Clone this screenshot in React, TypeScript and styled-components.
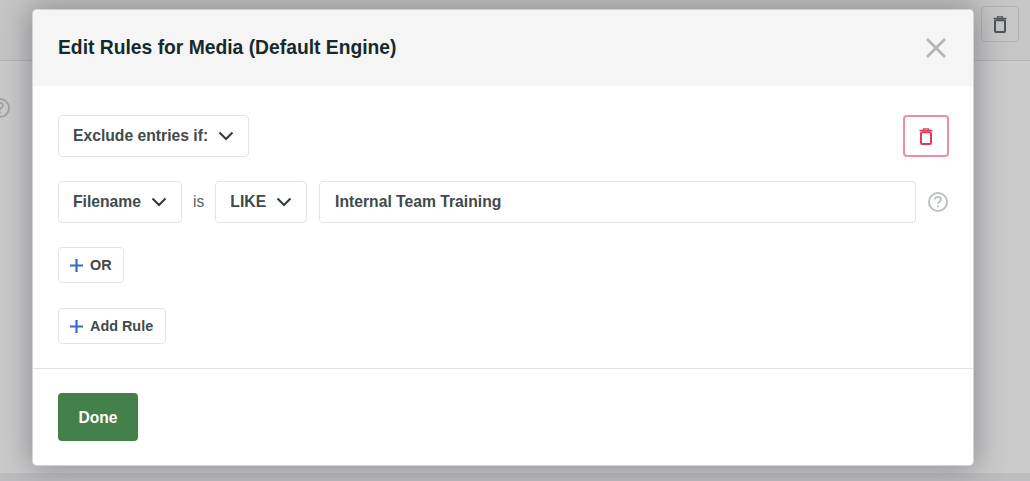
import { createGlobalStyle, styled } from 'styled-components'

const GlobalStyle = createGlobalStyle`
  html, body {
    margin: 0;
    padding: 0;
    overflow: hidden;
    font-family: 'Liberation Sans', Arial, sans-serif;
  }
`

const TrashIcon = () => (
  <svg width="14" height="17" viewBox="0 0 14 17" fill="none" stroke="currentColor">
    <path d="M0.5 2.6h13" strokeWidth="1.5" />
    <path d="M4.5 2V0.8h5V2" strokeWidth="1.3" />
    <rect x="2" y="4.2" width="10" height="11.8" rx="1" strokeWidth="2" />
  </svg>
)

const Chevron = () => (
  <svg width="16" height="10" viewBox="0 0 16 10" fill="none" stroke="#2f3b3d" strokeWidth="2">
    <path d="M1.5 1.5 8 8l6.5-6.5" />
  </svg>
)

const Plus = () => (
  <svg width="13" height="13" viewBox="0 0 13 13" fill="none" stroke="#3469d0" strokeWidth="2.2">
    <path d="M6.5 0v13M0 6.5h13" />
  </svg>
)

const Help = ({ color }: { color: string }) => (
  <svg width="20" height="20" viewBox="0 0 20 20" fill="none" stroke={color} strokeWidth="2">
    <circle cx="10" cy="10" r="9" />
    <path d="M7 7.6c0-1.8 1.3-2.8 3-2.8s3 1 3 2.5c0 2.4-3 2.3-3 4.6" strokeWidth="1.8" />
    <path d="M10 13.4v1.9" strokeWidth="1.9" />
  </svg>
)

export default function App() {
  return (
    <Page>
      <GlobalStyle />
      <TopBar>
        <GhostButton>
          <TrashIcon />
        </GhostButton>
      </TopBar>
      <BackHelp>
        <Help color="#a3a3a3" />
      </BackHelp>
      <BottomStrip />
      <Modal>
        <Header>
          <Title>Edit Rules for Media (Default Engine)</Title>
          <svg width="22" height="22" viewBox="0 0 22 22" fill="none" stroke="#b5b5b5" strokeWidth="2.6">
            <path d="M2 2l18 18M20 2 2 20" />
          </svg>
        </Header>
        <Body>
          <Row $between>
            <Select>
              Exclude entries if:
              <Chevron />
            </Select>
            <DeleteButton>
              <TrashIcon />
            </DeleteButton>
          </Row>
          <Row>
            <Select>
              Filename
              <Chevron />
            </Select>
            <Operator>is</Operator>
            <Select>
              LIKE
              <Chevron />
            </Select>
            <TextInput>Internal Team Training</TextInput>
            <HelpWrap>
              <Help color="#bcc0c0" />
            </HelpWrap>
          </Row>
          <AddButton $top={24} $pad={11}>
            <Plus />
            OR
          </AddButton>
          <AddButton $top={25} $pad={12}>
            <Plus />
            Add Rule
          </AddButton>
        </Body>
        <Footer>
          <DoneButton>Done</DoneButton>
        </Footer>
      </Modal>
    </Page>
  )
}

const Page = styled.div`
  position: relative;
  width: 1030px;
  height: 481px;
  overflow: hidden;
  background: #cbcbcb;
`

const TopBar = styled.div`
  height: 61px;
  box-sizing: border-box;
  border-bottom: 1px solid #b4b4b4;
  background: #c6c6c6;
  display: flex;
  justify-content: flex-end;
  padding: 6px 11px 0 0;
`

const GhostButton = styled.div`
  width: 38px;
  height: 36px;
  box-sizing: border-box;
  border: 1px solid #b2b2b2;
  border-radius: 4px;
  color: #4c5455;
  display: flex;
  align-items: center;
  justify-content: center;
`

const BackHelp = styled.div`
  position: absolute;
  left: -10px;
  top: 98px;
`

const BottomStrip = styled.div`
  position: absolute;
  left: 0;
  right: 0;
  top: 473px;
  bottom: 0;
  background: #bdbdc0;
`

const Modal = styled.div`
  position: absolute;
  left: 33px;
  top: 10px;
  width: 940px;
  height: 455px;
  background: #fff;
  border-radius: 4px;
  overflow: hidden;
  display: flex;
  flex-direction: column;
  box-shadow: 0 0 0 1px rgba(228, 228, 236, 0.7), 0 0 30px 4px rgba(70, 70, 85, 0.45);
`

const Header = styled.div`
  height: 76px;
  flex: none;
  background: #f5f5f5;
  display: flex;
  align-items: center;
  justify-content: space-between;
  padding: 0 26px 0 25px;
`

const Title = styled.div`
  font-size: 19.3px;
  font-weight: bold;
  color: #162a2c;
`

const Body = styled.div`
  flex: 1;
  padding: 29px 24px 0 25px;
  display: flex;
  flex-direction: column;
  align-items: flex-start;
`

const Row = styled.div<{ $between?: boolean }>`
  width: 100%;
  display: flex;
  align-items: center;
  justify-content: ${(p) => (p.$between ? 'space-between' : 'flex-start')};
  & + & {
    margin-top: 24px;
  }
`

const Select = styled.div`
  height: 42px;
  box-sizing: border-box;
  padding: 0 14px;
  border: 1px solid #e2e4e4;
  border-radius: 4px;
  background: #fff;
  display: flex;
  align-items: center;
  gap: 10px;
  font-size: 15.7px;
  font-weight: bold;
  color: #3f4a4c;
  white-space: nowrap;
`

const DeleteButton = styled.div`
  width: 46px;
  height: 42px;
  box-sizing: border-box;
  border: 2px solid #f08da0;
  border-radius: 4px;
  color: #e23a5c;
  display: flex;
  align-items: center;
  justify-content: center;
`

const Operator = styled.span`
  margin: 0 11px;
  font-size: 15.7px;
  color: #5b6466;
`

const TextInput = styled.div`
  flex: 1;
  height: 42px;
  margin-left: 12px;
  box-sizing: border-box;
  padding: 0 15px;
  border: 1px solid #e2e4e4;
  border-radius: 4px;
  display: flex;
  align-items: center;
  font-size: 15.7px;
  font-weight: bold;
  color: #3f4a4c;
`

const HelpWrap = styled.div`
  display: flex;
  margin: 0 1px 0 12px;
`

const AddButton = styled.div<{ $top: number; $pad: number }>`
  height: 36px;
  margin-top: ${(p) => p.$top}px;
  box-sizing: border-box;
  padding: 0 ${(p) => p.$pad}px 1px 11px;
  border: 1px solid #e2e4e4;
  border-radius: 4px;
  display: flex;
  align-items: center;
  gap: 7px;
  font-size: 14.4px;
  font-weight: bold;
  color: #3f4a4c;
  & svg {
    margin-top: 2px;
  }
`

const Footer = styled.div`
  height: 97px;
  flex: none;
  box-sizing: border-box;
  border-top: 1px solid #e2e4e4;
  padding: 24px 25px 0;
`

const DoneButton = styled.div`
  width: 80px;
  height: 48px;
  box-sizing: border-box;
  padding-top: 1px;
  border-radius: 4px;
  background: #44804a;
  color: #fff;
  font-size: 15.6px;
  font-weight: bold;
  display: flex;
  align-items: center;
  justify-content: center;
`
